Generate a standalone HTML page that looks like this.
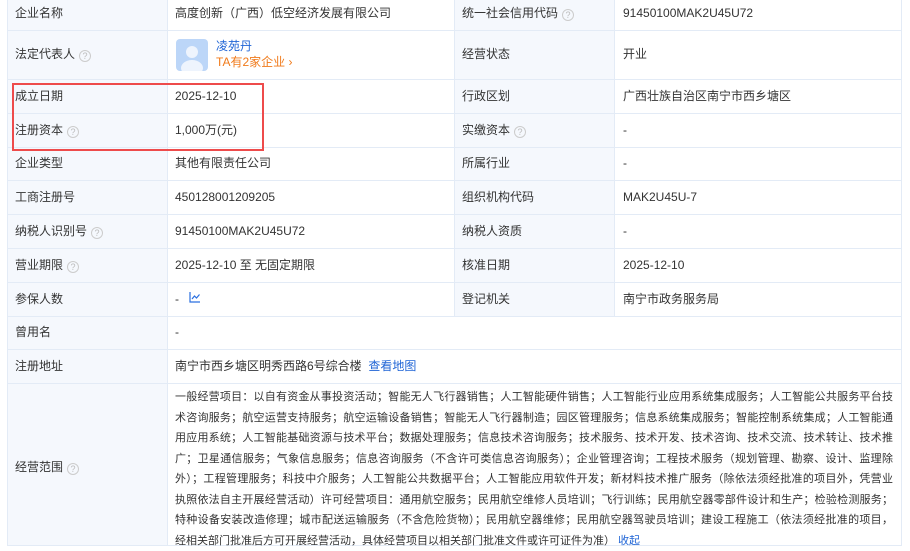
<!DOCTYPE html>
<html><head><meta charset="utf-8"><style>
*{margin:0;padding:0;box-sizing:border-box}
body{width:910px;height:539px;overflow:hidden;background:#fff;font-family:"Liberation Sans","Noto Sans CJK SC",sans-serif;font-size:12px;color:#333;position:relative}
.lab{position:absolute;background:#f5f8fd;border:1px solid #e3ebf6}
.val{position:absolute;border:1px solid #e3ebf6;background:#fff}
.t{position:absolute;white-space:nowrap;line-height:14px}
.q{display:inline-block;width:12px;height:12px;border:1px solid #ccc;border-radius:50%;color:#bbb;font-size:9px;line-height:10px;text-align:center;vertical-align:-1px;margin-left:4px}
.sc div{white-space:nowrap;height:20.5px;line-height:20.5px;width:718px;text-align:justify;text-align-last:justify;overflow:hidden}
.sc div.last{text-align-last:left}
</style></head><body>
<div id="g"></div>
<script>
var rows=[[-1,30],[30,79],[79,113],[113,147],[147,180],[180,214],[214,248],[248,282],[282,316],[316,349],[349,383],[383,545]];
var h='';
rows.forEach(function(r,i){
 var full=i>=9;
 h+='<div class="lab" style="left:7px;top:'+r[0]+'px;width:161px;height:'+(r[1]-r[0]+1)+'px"></div>';
 if(full){h+='<div class="val" style="left:167px;top:'+r[0]+'px;width:735px;height:'+(r[1]-r[0]+1)+'px"></div>';}
 else{
 h+='<div class="val" style="left:167px;top:'+r[0]+'px;width:288px;height:'+(r[1]-r[0]+1)+'px"></div>';
 h+='<div class="lab" style="left:454px;top:'+r[0]+'px;width:161px;height:'+(r[1]-r[0]+1)+'px"></div>';
 h+='<div class="val" style="left:614px;top:'+r[0]+'px;width:288px;height:'+(r[1]-r[0]+1)+'px"></div>';}
});
document.getElementById('g').innerHTML=h;
</script>
<div class="t" style="left:15px;top:6px">企业名称</div>
<div class="t" style="left:175px;top:6px">高度创新（广西）低空经济发展有限公司</div>
<div class="t" style="left:462px;top:6px">统一社会信用代码<span class="q">?</span></div>
<div class="t" style="left:623px;top:6px">91450100MAK2U45U72</div>

<div class="t" style="left:15px;top:47px">法定代表人<span class="q">?</span></div>
<div style="position:absolute;left:176px;top:39px;width:32px;height:32px;border-radius:4px;background:#bcd6f8;overflow:hidden"><div style="position:absolute;left:10px;top:7px;width:12px;height:12px;border-radius:50%;background:#eef4fd"></div><div style="position:absolute;left:5px;top:21px;width:22px;height:16px;border-radius:50%;background:#eef4fd"></div></div>
<div class="t" style="left:216px;top:39px;color:#2065d6">凌苑丹</div>
<div class="t" style="left:216px;top:55px;color:#f07a1a">TA有2家企业 ›</div>
<div class="t" style="left:462px;top:47px">经营状态</div>
<div class="t" style="left:623px;top:47px">开业</div>

<div class="t" style="left:15px;top:89px">成立日期</div>
<div class="t" style="left:175px;top:89px">2025-12-10</div>
<div class="t" style="left:462px;top:89px">行政区划</div>
<div class="t" style="left:623px;top:89px">广西壮族自治区南宁市西乡塘区</div>

<div class="t" style="left:15px;top:123px">注册资本<span class="q">?</span></div>
<div class="t" style="left:175px;top:123px">1,000万(元)</div>
<div class="t" style="left:462px;top:123px">实缴资本<span class="q">?</span></div>
<div class="t" style="left:623px;top:123px">-</div>

<div class="t" style="left:15px;top:156px">企业类型</div>
<div class="t" style="left:175px;top:156px">其他有限责任公司</div>
<div class="t" style="left:462px;top:156px">所属行业</div>
<div class="t" style="left:623px;top:156px">-</div>

<div class="t" style="left:15px;top:190px">工商注册号</div>
<div class="t" style="left:175px;top:190px">450128001209205</div>
<div class="t" style="left:462px;top:190px">组织机构代码</div>
<div class="t" style="left:623px;top:190px">MAK2U45U-7</div>

<div class="t" style="left:15px;top:224px">纳税人识别号<span class="q">?</span></div>
<div class="t" style="left:175px;top:224px">91450100MAK2U45U72</div>
<div class="t" style="left:462px;top:224px">纳税人资质</div>
<div class="t" style="left:623px;top:224px">-</div>

<div class="t" style="left:15px;top:258px">营业期限<span class="q">?</span></div>
<div class="t" style="left:175px;top:258px">2025-12-10 至 无固定期限</div>
<div class="t" style="left:462px;top:258px">核准日期</div>
<div class="t" style="left:623px;top:258px">2025-12-10</div>

<div class="t" style="left:15px;top:292px">参保人数</div>
<div class="t" style="left:175px;top:292px">-</div>
<svg style="position:absolute;left:189px;top:291px" width="12" height="12" viewBox="0 0 12 12" fill="none" stroke="#2a6fe0" stroke-width="1.2"><path d="M1 1V11H11M3 8L5.5 5L7.5 7L10.5 3.5"/></svg>
<div class="t" style="left:462px;top:292px">登记机关</div>
<div class="t" style="left:623px;top:292px">南宁市政务服务局</div>

<div class="t" style="left:15px;top:325px">曾用名</div>
<div class="t" style="left:175px;top:325px">-</div>

<div class="t" style="left:15px;top:359px">注册地址</div>
<div class="t" style="left:175px;top:359px">南宁市西乡塘区明秀西路6号综合楼 &nbsp;<span style="color:#2065d6">查看地图</span></div>

<div class="t" style="left:15px;top:460px">经营范围<span class="q">?</span></div>
<div class="sc" style="position:absolute;left:175px;top:387px;font-size:11px">
<div>一般经营项目：以自有资金从事投资活动；智能无人飞行器销售；人工智能硬件销售；人工智能行业应用系统集成服务；人工智能公共服务平台技</div>
<div>术咨询服务；航空运营支持服务；航空运输设备销售；智能无人飞行器制造；园区管理服务；信息系统集成服务；智能控制系统集成；人工智能通</div>
<div>用应用系统；人工智能基础资源与技术平台；数据处理服务；信息技术咨询服务；技术服务、技术开发、技术咨询、技术交流、技术转让、技术推</div>
<div>广；卫星通信服务；气象信息服务；信息咨询服务（不含许可类信息咨询服务）；企业管理咨询；工程技术服务（规划管理、勘察、设计、监理除</div>
<div>外）；工程管理服务；科技中介服务；人工智能公共数据平台；人工智能应用软件开发；新材料技术推广服务（除依法须经批准的项目外，凭营业</div>
<div>执照依法自主开展经营活动）许可经营项目：通用航空服务；民用航空维修人员培训；飞行训练；民用航空器零部件设计和生产；检验检测服务；</div>
<div>特种设备安装改造修理；城市配送运输服务（不含危险货物）；民用航空器维修；民用航空器驾驶员培训；建设工程施工（依法须经批准的项目，</div>
<div class="last">经相关部门批准后方可开展经营活动，具体经营项目以相关部门批准文件或许可证件为准） <span style="color:#2065d6">收起</span></div>
</div>

<div style="position:absolute;left:12px;top:83px;width:252px;height:68px;border:2px solid #ee4b4b"></div>
</body></html>
